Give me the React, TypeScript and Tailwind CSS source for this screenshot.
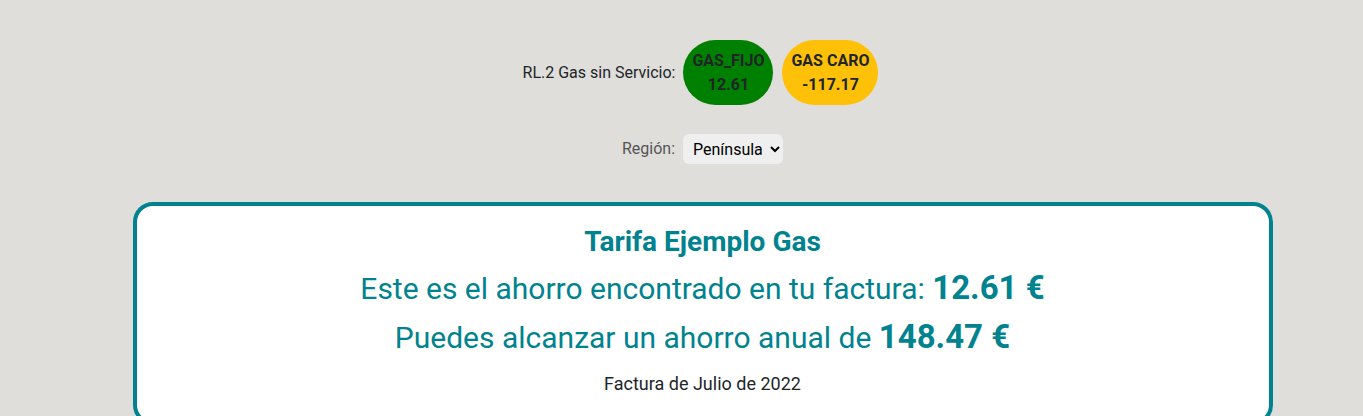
import React from "react";

export default function App() {
  return (
    <div className="min-h-screen bg-[#dfdeda] pl-[42px] font-['Roboto',sans-serif] text-[#212529]">
      {/* Tariff badges */}
      <div className="flex items-center justify-center gap-2 pr-1 pt-10">
        <span className="text-[16px]">RL.2 Gas sin Servicio:</span>
        <div className="flex gap-[9px]">
          <div className="flex h-[65px] w-[90px] flex-col items-center justify-center rounded-full bg-[#008000] text-[16px] font-bold leading-6">
            <span>GAS_FIJO</span>
            <span>12.61</span>
          </div>
          <div className="flex h-[65px] w-[96px] flex-col items-center justify-center rounded-full bg-[#ffc107] text-[16px] font-bold leading-6">
            <span>GAS CARO</span>
            <span>-117.17</span>
          </div>
        </div>
      </div>

      {/* Region select */}
      <div className="mt-[29px] flex items-center justify-center gap-2">
        <label className="text-[16px] text-[#555]">Región:</label>
        <select
          defaultValue="peninsula"
          className="h-[30px] rounded-md bg-[#efefef] pl-[6px] pr-[4px] text-[16px] text-black outline-none"
        >
          <option value="peninsula">Península</option>
          <option value="canarias">Canarias</option>
        </select>
      </div>

      {/* Savings card */}
      <div className="mx-auto mt-[38px] w-[1140px] rounded-[20px] border-4 border-[#00838f] bg-white pt-[19px] text-center text-[#00838f]">
        <h2 className="text-[28px] font-bold leading-[34px]">Tarifa Ejemplo Gas</h2>
        <p className="mt-[5px] text-[30px] leading-[49px]">
          Este es el ahorro encontrado en tu factura: <span className="text-[33px] font-bold leading-none">12.61 €</span>
        </p>
        <p className="text-[30px] leading-[49px]">
          Puedes alcanzar un ahorro anual de <span className="text-[33px] font-bold leading-none">148.47 €</span>
        </p>
        <p className="mt-2 pb-6 text-[18px] leading-[27px] text-[#212529]">Factura de Julio de 2022</p>
      </div>
    </div>
  );
}
